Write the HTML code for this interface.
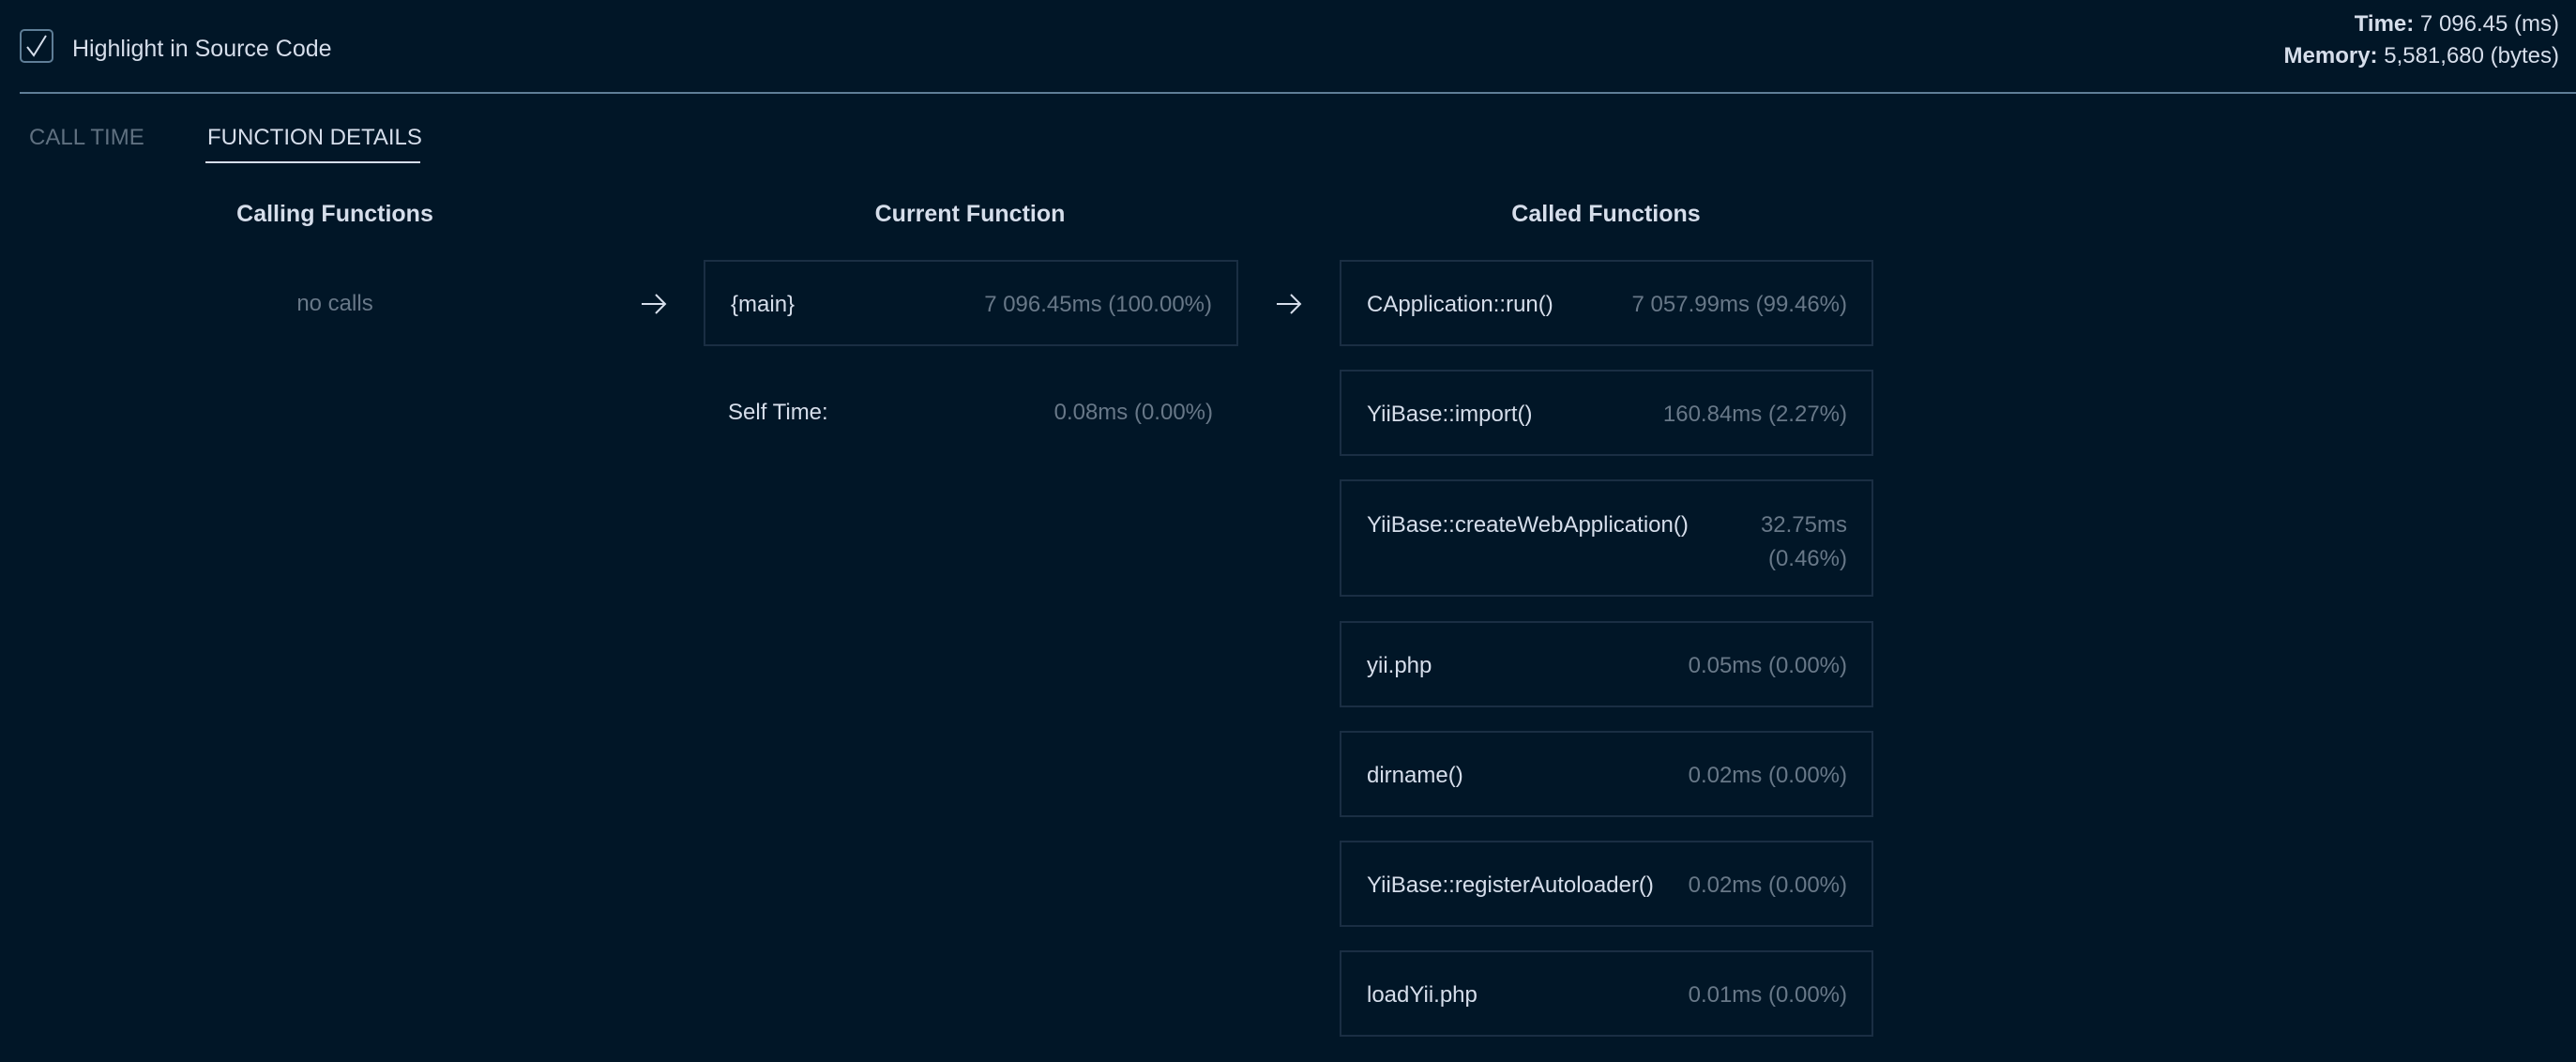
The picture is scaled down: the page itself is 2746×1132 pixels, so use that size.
<!DOCTYPE html>
<html><head><meta charset="utf-8"><style>
body{margin:0;width:2746px;height:1132px;background:#011627;font-family:"Liberation Sans",sans-serif;color:#d6deeb;position:relative;overflow:hidden}
.a{position:absolute;white-space:nowrap}
.cb{left:21px;top:31px;width:32px;height:32px;border:2px solid #5f7e97;border-radius:5px}
.sep{left:21px;right:0;top:98px;height:2px;background:#5f7e97}
.box{position:absolute;left:1428px;width:565px;height:88px;border:2px solid #1a2e43;font-size:24px}
.box .n{position:absolute;left:27px;top:2px;line-height:88px}
.box .v{position:absolute;right:26px;top:2px;line-height:88px;color:#687888;text-align:right}
h3{position:absolute;margin:0;font-size:25px;font-weight:bold;transform:translateX(-50%);top:214px;color:#d6deeb}
.arr{position:absolute;width:28px;height:24px}
</style></head><body>
<div class="a cb"><svg width="32" height="32" style="position:absolute;left:0;top:0"><path d="M6 17 L13 26 L26 5" fill="none" stroke="#d6deeb" stroke-width="2"/></svg></div>
<div class="a" style="left:77px;top:38px;font-size:25px">Highlight in Source Code</div>
<div class="a" style="right:18px;top:9px;font-size:24px;text-align:right;line-height:34px"><b>Time:</b> 7 096.45 (ms)<br><b>Memory:</b> 5,581,680 (bytes)</div>
<div class="a sep"></div>
<div class="a" style="left:31px;top:133px;font-size:24px;color:#5f7080">CALL TIME</div>
<div class="a" style="left:221px;top:133px;font-size:24px">FUNCTION DETAILS</div>
<div class="a" style="left:219px;top:172px;width:229px;height:2px;background:#d6deeb"></div>
<h3 style="left:357px">Calling Functions</h3>
<h3 style="left:1034px">Current Function</h3>
<h3 style="left:1712px">Called Functions</h3>
<div class="a" style="left:357px;transform:translateX(-50%);top:310px;font-size:24px;color:#687888">no calls</div>
<svg class="arr" style="left:683px;top:312px" viewBox="0 0 28 24"><path d="M1 12H26M16 2L26 12L16 22" fill="none" stroke="#d6deeb" stroke-width="2"/></svg>
<svg class="arr" style="left:1360px;top:312px" viewBox="0 0 28 24"><path d="M1 12H26M16 2L26 12L16 22" fill="none" stroke="#d6deeb" stroke-width="2"/></svg>
<div class="box" style="left:750px;width:566px;top:277px"><span class="n">{main}</span><span class="v">7 096.45ms (100.00%)</span></div>
<div class="a" style="left:776px;top:426px;font-size:24px">Self Time:</div>
<div class="a" style="right:1453px;top:426px;font-size:24px;color:#687888">0.08ms (0.00%)</div>
<div class="box" style="top:277px"><span class="n">CApplication::run()</span><span class="v">7 057.99ms (99.46%)</span></div>
<div class="box" style="top:394px"><span class="n">YiiBase::import()</span><span class="v">160.84ms (2.27%)</span></div>
<div class="box" style="top:511px;height:121px"><span class="n" style="line-height:36px;top:29px">YiiBase::createWebApplication()</span><span class="v" style="line-height:36px;top:29px">32.75ms<br>(0.46%)</span></div>
<div class="box" style="top:662px"><span class="n">yii.php</span><span class="v">0.05ms (0.00%)</span></div>
<div class="box" style="top:779px"><span class="n">dirname()</span><span class="v">0.02ms (0.00%)</span></div>
<div class="box" style="top:896px"><span class="n">YiiBase::registerAutoloader()</span><span class="v">0.02ms (0.00%)</span></div>
<div class="box" style="top:1013px"><span class="n">loadYii.php</span><span class="v">0.01ms (0.00%)</span></div>
</body></html>
